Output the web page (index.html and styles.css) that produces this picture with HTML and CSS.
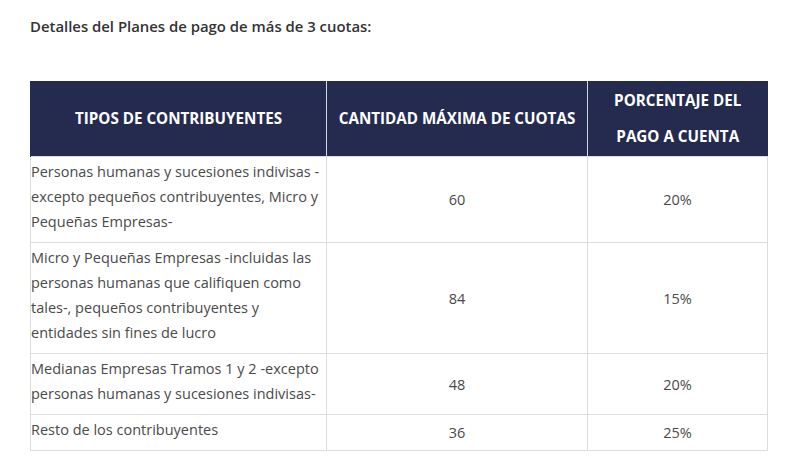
FILE: index.html
```html
<!DOCTYPE html>
<html lang="es">
<head>
<meta charset="utf-8">
<link rel="stylesheet" href="styles.css">
</head>
<body>
<div class="page">
  <h3 class="title">Detalles del Planes de pago de más de 3 cuotas:</h3>
  <table class="plans">
    <colgroup>
      <col class="c1"><col class="c2"><col class="c3">
    </colgroup>
    <thead>
      <tr>
        <th>TIPOS DE CONTRIBUYENTES</th>
        <th>CANTIDAD MÁXIMA DE CUOTAS</th>
        <th class="narrow">PORCENTAJE DEL PAGO A CUENTA</th>
      </tr>
    </thead>
    <tbody>
      <tr>
        <td class="desc">Personas humanas y sucesiones indivisas -excepto pequeños contribuyentes, Micro y Pequeñas Empresas-</td>
        <td class="num">60</td>
        <td class="num">20%</td>
      </tr>
      <tr>
        <td class="desc">Micro y Pequeñas Empresas -incluidas las personas humanas que califiquen como tales-, pequeños contribuyentes y entidades sin fines de lucro</td>
        <td class="num">84</td>
        <td class="num">15%</td>
      </tr>
      <tr>
        <td class="desc">Medianas Empresas Tramos 1 y 2 -excepto personas humanas y sucesiones indivisas-</td>
        <td class="num">48</td>
        <td class="num">20%</td>
      </tr>
      <tr>
        <td class="desc">Resto de los contribuyentes</td>
        <td class="num">36</td>
        <td class="num">25%</td>
      </tr>
    </tbody>
  </table>
</div>
</body>
</html>
```

FILE: styles.css
```css
html, body {
  margin: 0;
  padding: 0;
  background: #ffffff;
}
body {
  font-family: "Open Sans", "Noto Sans", sans-serif;
  color: #454545;
}
.page {
  padding: 15px 0 0 30px;
}
.title {
  margin: 0;
  font-size: 14.9px;
  font-weight: 600;
  line-height: 22px;
  color: #333333;
}
.plans {
  margin-top: 44px;
  border-collapse: collapse;
  table-layout: fixed;
  width: 737px;
}
.c1 { width: 296px; }
.c2 { width: 261px; }
.c3 { width: 180px; }
.plans th {
  background: #252b4f;
  color: #ffffff;
  font-size: 15.2px;
  font-weight: 700;
  line-height: 36px;
  padding: 1px 2px 2px;
  text-align: center;
  vertical-align: middle;
  border-left: 1px solid #d4d6de;
}
.plans th.narrow {
  padding-left: 16px;
  padding-right: 16px;
}
.plans th:first-child {
  border-left: 1px solid #252b4f;
}
.plans td {
  border: 1px solid #dcdcdc;
  font-size: 14.5px;
  line-height: 25px;
  color: #4a4a4a;
}
.plans td.desc {
  padding: 2px 4px 8px 0;
  vertical-align: top;
}
.plans td.num {
  text-align: center;
  vertical-align: middle;
  padding: 0 4px;
}
```
